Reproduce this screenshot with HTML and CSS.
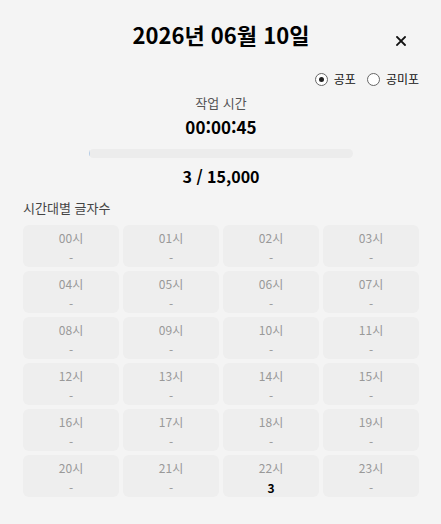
FILE: index.html
```html
<!DOCTYPE html>
<html lang="ko">
    <head>
        <meta charset="UTF-8">
        <title>작업 기록</title>
        <link rel="stylesheet" href="styles.css">
    </head>
    <body>
        <div class="panel">
            <div class="head">
                <h1 class="title">2026년 06월 10일</h1>
                <button class="close" type="button" aria-label="닫기">
                    <svg width="10" height="10" viewBox="0 0 10 10">
                        <path d="M1 1 L9 9 M9 1 L1 9" stroke="#111" stroke-width="1.8" stroke-linecap="square"/>
                    </svg>
                </button>
            </div>

            <div class="modes">
                <label class="mode"><span class="radio on"></span>공포</label>
                <label class="mode"><span class="radio"></span>공미포</label>
            </div>

            <div class="summary">
                <div class="label">작업 시간</div>
                <div class="time">00:00:45</div>
                <div class="bar"><div class="fill" style="width: 0.02%"></div></div>
                <div class="count">3 / 15,000</div>
            </div>

            <div class="section">시간대별 글자수</div>
            <div class="hours" id="hours"></div>
        </div>

        <script>
            var hours = document.getElementById("hours");
            var counts = { 22: 3 };

            for (var i = 0; i < 24; i++) {
                var cell = document.createElement("div");
                var name = (i < 10 ? "0" + i : "" + i) + "시";
                var value = counts[i];

                cell.className = "hour";
                cell.innerHTML = '<div class="hour-name">' + name + '</div>' +
                    '<div class="hour-value' + (value ? ' has' : '') + '">' + (value ? value : "-") + '</div>';
                hours.appendChild(cell);
            }
        </script>
    </body>
</html>
```

FILE: styles.css
```css
body {
    margin: 0;
    background: #f4f4f4;
    font-family: "Noto Sans CJK KR", "Noto Sans", sans-serif;
    color: #111;
}

.panel {
    padding: 18px 22px 26px 23px;
}

.head {
    position: relative;
    text-align: center;
}

.title {
    margin: 0;
    font-size: 22px;
    line-height: 32px;
    font-weight: 700;
    color: #000;
}

.close {
    position: absolute;
    right: 11px;
    top: 16px;
    width: 14px;
    height: 14px;
    padding: 0;
    border: none;
    background: none;
    display: flex;
    align-items: center;
    justify-content: center;
}

.modes {
    display: flex;
    justify-content: flex-end;
    gap: 11px;
    margin-top: 21px;
    font-size: 12px;
    line-height: 16px;
}

.mode {
    display: flex;
    align-items: center;
    gap: 6px;
}

.radio {
    width: 11px;
    height: 11px;
    border: 1px solid #666;
    border-radius: 50%;
    background: #fff;
    position: relative;
}

.radio.on::after {
    content: "";
    position: absolute;
    left: 3px;
    top: 3px;
    width: 5px;
    height: 5px;
    border-radius: 50%;
    background: #222;
}

.summary {
    display: flex;
    flex-direction: column;
    align-items: center;
    margin-top: 7px;
}

.label {
    font-size: 13px;
    line-height: 18px;
    color: #555;
}

.time {
    margin-top: 4px;
    font-size: 17px;
    line-height: 22px;
    font-weight: 700;
    color: #000;
}

.bar {
    width: 264px;
    height: 9px;
    margin-top: 11px;
    border-radius: 5px;
    background: #ececec;
    overflow: hidden;
}

.fill {
    height: 100%;
    min-width: 1px;
    background: #b7cde6;
}

.count {
    margin-top: 7px;
    font-size: 16px;
    line-height: 22px;
    font-weight: 700;
    color: #000;
}

.section {
    margin-top: 12px;
    font-size: 13px;
    line-height: 18px;
    color: #444;
}

.hours {
    display: grid;
    grid-template-columns: repeat(4, 1fr);
    gap: 4px;
    margin-top: 8px;
}

.hour {
    height: 42px;
    border-radius: 6px;
    background: #eeeeee;
    text-align: center;
}

.hour-name {
    padding-top: 5px;
    font-size: 12px;
    line-height: 16px;
    color: #999;
}

.hour-value {
    margin-top: 4px;
    font-size: 12px;
    line-height: 16px;
    color: #999;
}

.hour-value.has {
    font-weight: 700;
    color: #000;
}
```
